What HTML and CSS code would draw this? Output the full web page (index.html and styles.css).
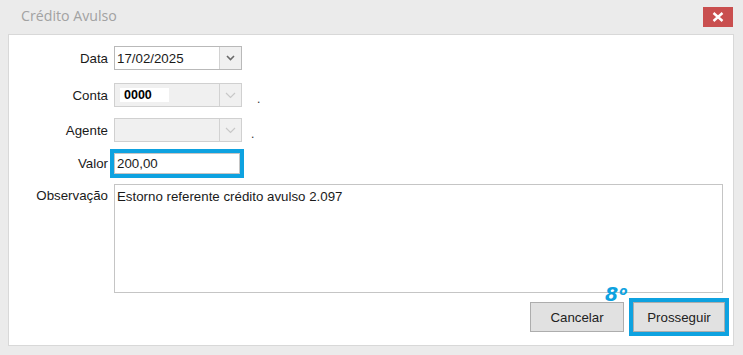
FILE: index.html
```html
<!DOCTYPE html>
<html lang="pt-BR">
<head>
    <meta charset="UTF-8">
    <meta name="viewport" content="width=device-width, initial-scale=1.0">
    <title>Crédito Avulso</title>
    <link rel="stylesheet" href="styles.css">
</head>
<body>

    <div class="window">
        <div class="titlebar">
            <span class="title">Crédito Avulso</span>
            <button class="close" title="Fechar">
                <svg width="12" height="10" viewBox="0 0 12 10">
                    <path d="M1.5 1 L10.5 9 M10.5 1 L1.5 9" stroke="#fff" stroke-width="2.4" fill="none"/>
                </svg>
            </button>
        </div>

        <div class="panel">
            <div class="row row-data">
                <label class="label">Data</label>
                <div class="combo">
                    <span class="combo-text">17/02/2025</span>
                    <span class="combo-btn"><svg width="9" height="6" viewBox="0 0 9 6"><path d="M1 1 L4.5 4.5 L8 1" stroke="#6a6a6a" stroke-width="1.6" fill="none"/></svg></span>
                </div>
            </div>

            <div class="row row-conta">
                <label class="label">Conta</label>
                <div class="combo disabled">
                    <span class="combo-text"><span class="code">0000</span></span>
                    <span class="combo-btn"><svg width="11" height="7" viewBox="0 0 11 7"><path d="M1 1 L5.5 5.5 L10 1" stroke="#c8c8c8" stroke-width="1.2" fill="none"/></svg></span>
                </div>
                <span class="dot dot-conta">.</span>
            </div>

            <div class="row row-agente">
                <label class="label">Agente</label>
                <div class="combo disabled">
                    <span class="combo-text"></span>
                    <span class="combo-btn"><svg width="11" height="7" viewBox="0 0 11 7"><path d="M1 1 L5.5 5.5 L10 1" stroke="#c8c8c8" stroke-width="1.2" fill="none"/></svg></span>
                </div>
                <span class="dot dot-agente">.</span>
            </div>

            <div class="row row-valor">
                <label class="label">Valor</label>
                <div class="input highlight">200,00</div>
            </div>

            <div class="row row-obs">
                <label class="label">Observação</label>
                <div class="textarea">Estorno referente crédito avulso 2.097</div>
            </div>

            <div class="actions">
                <div class="btn-wrap">
                    <span class="step">8<span class="step-o">o</span></span>
                    <button class="btn">Cancelar</button>
                </div>
                <button class="btn btn-next highlight">Prosseguir</button>
            </div>
        </div>
    </div>

</body>
</html>
```

FILE: styles.css
```css
html, body { margin: 0; padding: 0; }
body { font-family: "Liberation Sans", Arial, sans-serif; font-size: 13.3px; color: #1a1a1a; background: #ebebeb; }

.window { width: 743px; height: 355px; background: #ebebeb; box-sizing: border-box; }

.titlebar { height: 34px; display: flex; align-items: flex-start; justify-content: space-between; }
.title { font-family: "Open Sans", sans-serif; font-size: 14.2px; color: #a2a2a2; margin: 6px 0 0 21px; }
.close {
    width: 30px; height: 20px; margin: 7px 10px 0 0; padding: 0; border: none;
    background: #c94f4f; display: flex; align-items: center; justify-content: center;
}

.panel {
    margin-left: 8px; width: 726px; height: 312px; box-sizing: border-box;
    background: #fff; border: 1px solid #d8d8d8; padding: 11px 8px 0 0;
}

.row { display: flex; align-items: center; }
.label { width: 99px; text-align: right; margin-right: 6px; }
.row-conta { margin-top: 13px; }
.row-agente { margin-top: 11px; }
.row-valor { margin-top: 11px; }
.row-obs { margin-top: 10px; align-items: flex-start; }
.row-obs .label { margin-top: 4px; }

.combo {
    width: 128px; height: 24px; box-sizing: border-box; display: flex;
    border: 1px solid #b9b9b9; background: #fff;
}
.combo-text { flex: 1; padding-left: 2px; display: flex; align-items: center; }
.combo-btn {
    width: 21px; border-left: 1px solid #d2d2d2; background: #f0f0f0;
    display: flex; align-items: center; justify-content: center;
}
.combo.disabled { background: #f0f0f0; border-color: #d0d0d0; }
.combo.disabled .combo-text { padding-left: 5px; }
.code { background: #fff; font-weight: bold; font-size: 12.5px; color: #000; width: 45px; height: 14px; line-height: 14px; padding-left: 4px; }

.dot { font-size: 12px; color: #333; }
.dot-conta { margin-left: 15px; margin-top: 8px; }
.dot-agente { margin-left: 9px; margin-top: 8px; }

.input {
    width: 126px; height: 21px; box-sizing: border-box; border: 1px solid #c5c5c5;
    padding: 2px 0 0 2px;
}
.highlight { outline: 4px solid #0ea2e0; }

.textarea {
    width: 609px; height: 109px; box-sizing: border-box; border: 1px solid #c5c5c5;
    padding: 4px 0 0 2px;
}

.actions { display: flex; justify-content: flex-end; gap: 9px; margin-top: 9px; }
.btn-wrap { position: relative; }
.btn {
    width: 94px; height: 30px; font-family: "Liberation Sans", Arial, sans-serif; font-size: 13.3px;
    color: #222; background: #e1e1e1; border: 1px solid #adadad; padding: 0;
}
.btn-next { width: 92px; }
.step {
    position: absolute; left: 75px; top: -22px; font-family: "DejaVu Sans", sans-serif;
    font-weight: bold; font-style: italic; font-size: 19px; color: #0ea2e0; line-height: 22px;
}
.step-o { font-size: 12px; vertical-align: 6px; margin-left: 1px; }
```
